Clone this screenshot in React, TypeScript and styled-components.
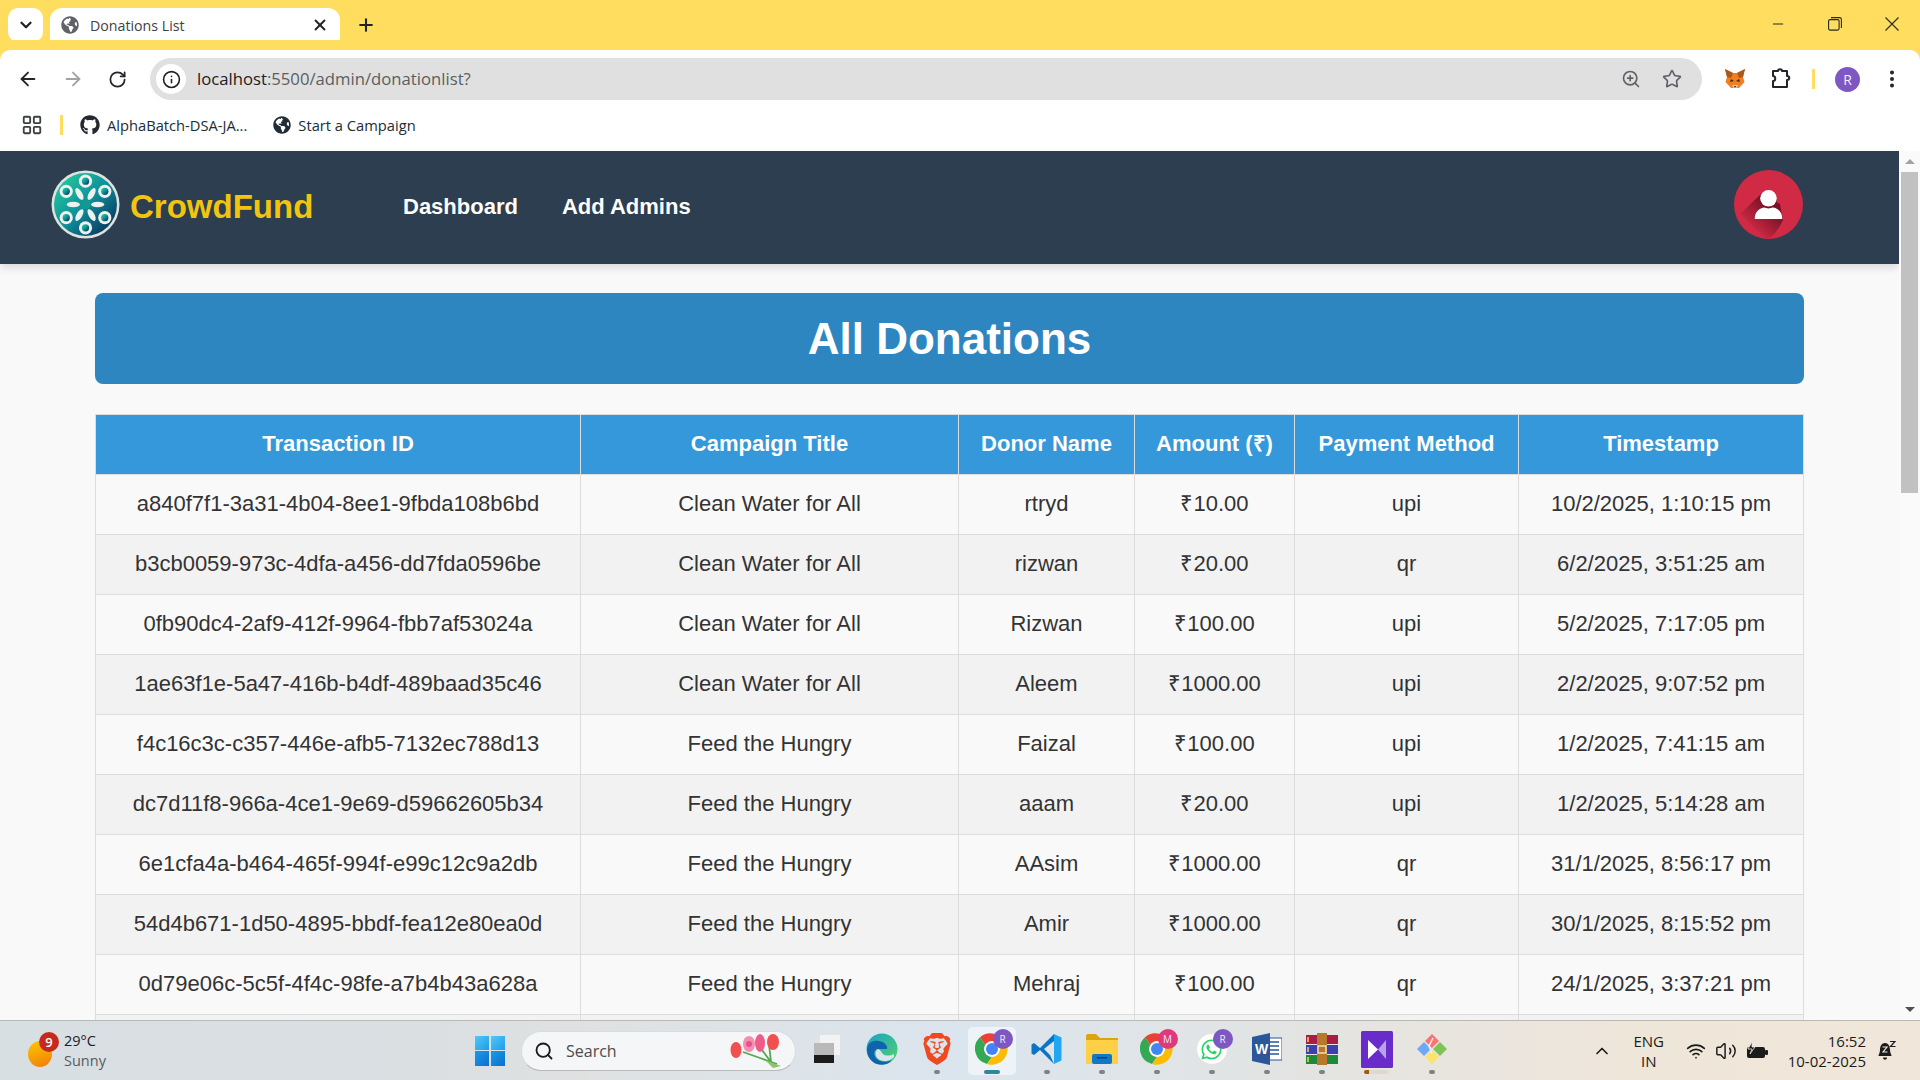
import React from "react";
import styled, { createGlobalStyle } from "styled-components";
import {
    ArrowLeft,
    ArrowRight,
    ChevronDown,
    ChevronUp,
    EllipsisVertical,
    Info,
    LayoutGrid,
    Minus,
    Plus,
    RotateCw,
    Search,
    Star,
    Volume2,
    Wifi,
    X,
    ZoomIn,
} from "lucide-react";
import { FaGithub, FaGlobeAmericas, FaWhatsapp } from "react-icons/fa";
import { SiBrave } from "react-icons/si";

const UI_FONT = `"Open Sans", "Noto Sans", sans-serif`;

const GlobalStyle = createGlobalStyle`
    html, body {
        margin: 0;
        height: 100%;
        overflow: hidden;
    }
    * {
        box-sizing: border-box;
    }
`;

const Screen = styled.div`
    width: 1920px;
    height: 1080px;
    display: flex;
    flex-direction: column;
    overflow: hidden;
    font-family: "Liberation Sans", Arial, sans-serif;
    background: #fff;
`;

/* ---- browser chrome ---- */

const TabStrip = styled.div`
    height: 50px;
    flex: none;
    background: #ffdd5f;
    display: flex;
    align-items: flex-end;
    padding-left: 8px;
`;

const TabSearchButton = styled.div`
    width: 35px;
    height: 34px;
    margin-bottom: 8px;
    margin-right: 7px;
    border-radius: 10px;
    background: #fff;
    color: #1f2328;
    display: flex;
    align-items: center;
    justify-content: center;
`;

const Tab = styled.div`
    position: relative;
    width: 290px;
    height: 42px;
    background: #fff;
    border-radius: 12px 12px 0 0;
    display: flex;
    align-items: center;
    padding: 0 11px 8px 11px;
    color: #5f6368;

    &::after {
        content: "";
        position: absolute;
        right: -12px;
        bottom: 0;
        width: 12px;
        height: 12px;
        background: radial-gradient(circle at 100% 0, transparent 12px, #fff 12.5px);
    }
`;

const TabTitle = styled.span`
    font: 14.2px ${UI_FONT};
    color: #3f4245;
    margin-left: 11px;
    flex: 1;
    white-space: nowrap;
`;

const TabClose = styled.span`
    color: #1f2328;
    display: flex;
`;

const NewTab = styled.div`
    width: 32px;
    height: 32px;
    margin: 0 0 9px 10px;
    color: #1f2328;
    display: flex;
    align-items: center;
    justify-content: center;
`;

const WindowControls = styled.div`
    margin-left: auto;
    height: 50px;
    display: flex;
    align-items: center;
    color: #2a2a20;
`;

const WindowControl = styled.div`
    width: 57px;
    display: flex;
    justify-content: center;
    margin-bottom: 2px;
`;

const Toolbar = styled.div`
    height: 50px;
    flex: none;
    background: #fff;
    display: flex;
    align-items: center;
    padding: 8px 0 0 5px;
    border-radius: 10px 10px 0 0;
    position: relative;
    box-shadow: 0 -10px 0 0 #ffdd5f;
`;

const NavButton = styled.div<{ $muted?: boolean }>`
    width: 45px;
    display: flex;
    justify-content: center;
    color: ${p => (p.$muted ? "#a0a2a5" : "#22262a")};
`;

const AddressBar = styled.div`
    width: 1552px;
    height: 42px;
    margin-left: 10px;
    border-radius: 21px;
    background: #e0e0e0;
    display: flex;
    align-items: center;
    padding: 0 20px 0 6px;
`;

const SiteInfo = styled.div`
    width: 30px;
    height: 30px;
    border-radius: 50%;
    background: #fff;
    color: #202124;
    display: flex;
    align-items: center;
    justify-content: center;
    margin-right: 11px;
`;

const UrlHost = styled.span`
    font: 16.7px ${UI_FONT};
    color: #202124;
    margin-bottom: 1px;
`;

const UrlPath = styled.span`
    font: 16.7px ${UI_FONT};
    color: #5b5e60;
    margin-bottom: 1px;
`;

const BarActions = styled.div`
    margin-left: auto;
    display: flex;
    align-items: center;
    gap: 21px;
    color: #5f6368;
`;

const Extensions = styled.div`
    display: flex;
    align-items: center;
    margin-left: 10px;
`;

const ExtensionSlot = styled.div`
    width: 46px;
    display: flex;
    justify-content: center;
    color: #22262a;
`;

const ToolbarDivider = styled.div`
    width: 3px;
    height: 20px;
    margin: 0 20px 0 8px;
    background: #ffdd5f;
`;

const ProfileBadge = styled.div`
    width: 25px;
    height: 25px;
    border-radius: 50%;
    background: #7e57c2;
    color: #f5eefc;
    font: 14px ${UI_FONT};
    display: flex;
    align-items: center;
    justify-content: center;
    margin-right: 21px;
`;

const BookmarksBar = styled.div`
    height: 51px;
    flex: none;
    background: #fff;
    display: flex;
    align-items: center;
    padding: 0 0 1px 21px;
    color: #202d36;
`;

const BookmarkDivider = styled.div`
    width: 3px;
    height: 20px;
    margin: 0 17px 0 17px;
    background: #ffdd5f;
`;

const Bookmark = styled.div`
    display: flex;
    align-items: center;
    gap: 7px;
    margin-right: 26px;
    font: 14.7px ${UI_FONT};
    color: #202d36;
    white-space: nowrap;
`;

/* ---- page ---- */

const Viewport = styled.div`
    flex: 1;
    min-height: 0;
    display: flex;
    overflow: hidden;
`;

const Page = styled.div`
    width: 1899px;
    flex: none;
    background: #f9f9f9;
`;

const SiteNav = styled.nav`
    height: 113px;
    background: #2c3e50;
    box-shadow: 0 4px 8px rgba(0, 0, 0, 0.12);
    display: flex;
    align-items: center;
    padding: 0 60px 6px 51px;
`;

const Brand = styled.div`
    display: flex;
    align-items: center;
    gap: 10px;
    width: 352px;
`;

const BrandName = styled.span`
    font-size: 33px;
    font-weight: 700;
    color: #f1c40f;
    margin-top: 4px;
`;

const NavLink = styled.a`
    font-size: 22px;
    font-weight: 700;
    color: #fff;
    margin: 4px 44px 0 0;
`;

const UserAvatar = styled.div`
    margin-left: auto;
    margin-right: 36px;
    display: flex;
`;

const Content = styled.main`
    padding: 29px 95px 0 95px;
`;

const Heading = styled.h1`
    margin: 0 0 30px;
    height: 91px;
    border-radius: 8px;
    background: #2e86c1;
    color: #fff;
    font-size: 44px;
    font-weight: 700;
    display: flex;
    align-items: center;
    justify-content: center;
`;

const Table = styled.table`
    width: 100%;
    table-layout: fixed;
    border-collapse: collapse;
    font-size: 22px;
    line-height: 26px;
    color: #333;
`;

const HeadCell = styled.th`
    height: 60px;
    padding: 0 0 2px;
    background: #3498db;
    color: #fff;
    font-size: 22px;
    font-weight: 700;
    text-align: center;
    border: 1px solid #ddd;
`;

const Row = styled.tr`
    background: #f9f9f9;

    &:nth-child(even) {
        background: #f2f2f2;
    }
`;

const Cell = styled.td`
    height: 60px;
    padding: 0 0 1px;
    text-align: center;
    border: 1px solid #ddd;
    white-space: nowrap;
`;

const Scrollbar = styled.div`
    flex: 1;
    display: flex;
    flex-direction: column;
    align-items: center;
    background: #fafafa;
`;

const ScrollArrow = styled.div<{ $down?: boolean }>`
    height: 21px;
    width: 100%;
    flex: none;
    display: flex;
    align-items: center;
    justify-content: center;

    &::before {
        content: "";
        border-left: 5px solid transparent;
        border-right: 5px solid transparent;
        ${p => (p.$down ? "border-top: 5px solid #505050;" : "border-bottom: 5px solid #a3a3a3;")}
    }
`;

const ScrollTrack = styled.div`
    flex: 1;
    width: 100%;
    padding: 0 2px 0 2px;
`;

const ScrollThumb = styled.div`
    height: 321px;
    background: #c1c1c1;
`;

/* ---- taskbar ---- */

const Taskbar = styled.footer`
    height: 60px;
    flex: none;
    display: flex;
    align-items: center;
    border-top: 1px solid #b9b9b7;
    background: linear-gradient(90deg, #d8dfe3 0%, #dadfe2 22%, #dfe1e1 30%, #dbe5ee 50%, #e3e4e2 68%, #efe6da 85%, #f0e6d9 100%);
    color: #1c1c1c;
    font-family: ${UI_FONT};
`;

const Weather = styled.div`
    width: 470px;
    flex: none;
    display: flex;
    align-items: center;
    padding-left: 28px;
    gap: 12px;
`;

const WeatherIcon = styled.div`
    position: relative;
    width: 24px;
    height: 26px;
    margin-top: 6px;
    border-radius: 50%;
    background: linear-gradient(160deg, #ffc800, #f07a0a);
`;

const WeatherBadge = styled.span`
    position: absolute;
    left: 11px;
    top: -9px;
    width: 20px;
    height: 20px;
    border-radius: 50%;
    background: #c42b1c;
    color: #fff;
    font: 600 13px ${UI_FONT};
    display: flex;
    align-items: center;
    justify-content: center;
`;

const WeatherText = styled.div`
    display: flex;
    flex-direction: column;
    font-size: 14.5px;
    line-height: 20px;
`;

const WeatherSub = styled.span`
    color: #565b5e;
`;

const StartButton = styled.div`
    width: 30px;
    height: 30px;
    flex: none;
    margin-right: 16px;
    margin-left: 5px;
    display: grid;
    grid-template-columns: 1fr 1fr;
    gap: 1.5px;
`;

const StartPane = styled.span<{ $deep?: boolean }>`
    background: ${p => (p.$deep ? "linear-gradient(135deg, #1a9be8, #0a6fd0)" : "linear-gradient(135deg, #52c7f9, #1c9de8)")};
`;

const SearchBox = styled.div`
    width: 275px;
    height: 40px;
    flex: none;
    border-radius: 20px;
    background: #f4f6f8;
    border: 1px solid #d9dbdd;
    border-bottom-color: #b8babc;
    display: flex;
    align-items: center;
    padding: 0 10px 0 12px;
    gap: 12px;
    color: #1b1b1b;
    margin-right: 3px;
`;

const SearchLabel = styled.span`
    font-size: 16px;
    color: #4c4c4c;
    flex: 1;
`;

const Apps = styled.div`
    display: flex;
    align-items: center;
`;

const AppSlot = styled.div<{ $active?: boolean }>`
    position: relative;
    width: ${p => (p.$active ? "48px" : "55px")};
    height: 48px;
    margin: ${p => (p.$active ? "0 3.5px" : "0")};
    display: flex;
    align-items: center;
    justify-content: center;
    padding-bottom: 3px;
    border-radius: 5px;
    background: ${p => (p.$active ? "#eef3f8" : "transparent")};
`;

const RunDot = styled.span<{ $active?: boolean }>`
    position: absolute;
    bottom: 1px;
    left: 50%;
    transform: translateX(-50%);
    height: 4px;
    border-radius: 2px;
    width: ${p => (p.$active ? "16px" : "6px")};
    background: ${p => (p.$active ? "#2a8a9c" : "#7f8183")};
`;

const ProgressDot = styled.span`
    position: absolute;
    bottom: 1px;
    left: 15px;
    width: 25px;
    height: 4px;
    border-radius: 2px;
    background: linear-gradient(90deg, #a55a00 0 20%, #ddd8d0 20%);
`;

const AppBadge = styled.span<{ $tone: string; $inset?: boolean }>`
    position: absolute;
    top: 2px;
    right: ${p => (p.$inset ? "3px" : "6.5px")};
    width: 20px;
    height: 20px;
    border-radius: 50%;
    background: ${p => p.$tone};
    color: #f3e9fa;
    font-size: 10px;
    display: flex;
    align-items: center;
    justify-content: center;
`;

const WhatsappDisc = styled.span`
    width: 30px;
    height: 30px;
    border-radius: 50%;
    background: #fff;
    color: #25d366;
    display: flex;
    align-items: center;
    justify-content: center;
`;

const Tray = styled.div`
    margin-left: auto;
    display: flex;
    align-items: center;
    color: #1b1b1b;
`;

const TrayChevron = styled.div`
    display: flex;
    margin-right: 12px;
`;

const Lang = styled.div`
    width: 50px;
    margin-right: 12px;
    text-align: center;
    font-size: 15px;
    line-height: 20px;
`;

const TrayIcons = styled.div`
    display: flex;
    align-items: center;
    gap: 9px;
    margin-right: 20px;
`;

const Clock = styled.div`
    text-align: right;
    font-size: 15px;
    line-height: 20px;
    margin-right: 12px;
`;

const BellSlot = styled.div`
    display: flex;
    margin-right: 24px;
`;

/* ---- drawn icons ---- */

const LOGO_DOTS = [
    [34, 11],
    [53, 21],
    [53, 47],
    [34, 57],
    [15, 47],
    [15, 21],
];

const LOGO_PETALS = [0, 60, 120, 180, 240, 300];

function CrowdFundLogo() {
    return (
        <svg width="69" height="69" viewBox="0 0 68 68">
            <defs>
                <linearGradient id="logoRing" x1="0.1" y1="0.1" x2="0.9" y2="0.9">
                    <stop offset="0" stopColor="#22c79c" />
                    <stop offset="0.5" stopColor="#0f8f9a" />
                    <stop offset="1" stopColor="#0a3560" />
                </linearGradient>
            </defs>
            <circle cx="34" cy="34" r="33.5" fill="#dfe3df" />
            <circle cx="34" cy="34" r="31" fill="url(#logoRing)" />
            {LOGO_DOTS.map(([x, y]) => (
                <React.Fragment key={`${x}-${y}`}>
                    <circle cx={x} cy={y} r="6.5" fill="#eef2ee" />
                    <circle cx={x} cy={y} r="3.6" fill="url(#logoRing)" />
                </React.Fragment>
            ))}
            {LOGO_PETALS.map(a => (
                <ellipse key={a} cx="46" cy="34" rx="6.5" ry="2.8" fill="#eef2ee" transform={`rotate(${a} 34 34)`} />
            ))}
            <circle cx="34" cy="34" r="5" fill="#129a8e" />
        </svg>
    );
}

function UserIcon() {
    return (
        <svg width="69" height="69" viewBox="0 0 69 69">
            <defs>
                <linearGradient id="avatarShade" gradientUnits="userSpaceOnUse" x1="38" y1="38" x2="17" y2="60">
                    <stop offset="0" stopColor="#7a1226" />
                    <stop offset="1" stopColor="#d12a45" />
                </linearGradient>
            </defs>
            <circle cx="34.5" cy="34.5" r="34.5" fill="#d12a45" />
            <path d="M27 24 L6 44 L31 69 Q40 69 49 50 L46 34 Z" fill="url(#avatarShade)" />
            <path d="M20.7 49 C20.7 41 26 37 34.5 37 C43 37 48.3 41 48.3 49 Z" fill="#fff" />
            <circle cx="34.5" cy="30" r="8.5" fill="#7a1226" />
            <circle cx="34.5" cy="28.3" r="8.3" fill="#fff" />
        </svg>
    );
}

function FoxIcon() {
    return (
        <svg width="22" height="22" viewBox="0 0 22 22">
            <path d="M1 1 L9 5 H13 L21 1 L19 9 L20.5 14 L15 20 H7 L1.5 14 L3 9 Z" fill="#f0801f" />
            <path d="M1 1 L9 5 L7 10 L3 9 Z M21 1 L13 5 L15 10 L19 9 Z" fill="#a9591c" />
            <path d="M7 11 L10 13 L6 14 Z M15 11 L12 13 L16 14 Z" fill="#3a2a20" />
            <path d="M8 17 H14 L12.5 20 H9.5 Z" fill="#d9c9bc" />
            <path d="M10 18 H12 L11 20 Z" fill="#222" />
        </svg>
    );
}

function PuzzleIcon() {
    return (
        <svg width="22" height="22" viewBox="0 0 22 22" fill="none" stroke="#22262a" strokeWidth="2" strokeLinejoin="round">
            <path d="M3 3 H8 C8 0.5 12 0.5 12 3 H17 V8 C20 8 20 12 17 12 V19 H3 V13 C6 13 6 8 3 8 Z" />
        </svg>
    );
}

function ChromeIcon({ size = 34 }: { size?: number }) {
    return (
        <svg width={size} height={size} viewBox="0 0 48 48">
            <path d="M24 2 A22 22 0 0 1 43 13 L24 13 A11 11 0 0 0 14.5 18.5 L7 7.5 A22 22 0 0 1 24 2 Z" fill="#ea4335" />
            <path d="M7 7.5 L14.5 18.5 A11 11 0 0 0 24 35 L17 45 A22 22 0 0 1 7 7.5 Z" fill="#34a853" />
            <path d="M43 13 A22 22 0 0 1 17 45 L24 35 A11 11 0 0 0 33.5 18.5 L24 13 Z" fill="#fbbc04" />
            <circle cx="24" cy="24" r="11" fill="#fff" />
            <circle cx="24" cy="24" r="8.5" fill="#4285f4" />
        </svg>
    );
}

function EdgeIcon() {
    return (
        <svg width="32" height="32" viewBox="0 0 32 32">
            <defs>
                <linearGradient id="edgeTop" x1="0" y1="0" x2="1" y2="1">
                    <stop offset="0" stopColor="#1ba1c8" />
                    <stop offset="1" stopColor="#52d36b" />
                </linearGradient>
            </defs>
            <circle cx="16" cy="16" r="15.5" fill="url(#edgeTop)" />
            <path d="M1 17 C1 9 8 7 13 8 C19 9 22 13 21 16 H12 C8 16 7 21 10 25 C13 29 20 30 26 27 C21 33 12 33 7 29 C3 26 1 22 1 17 Z" fill="#0f63ad" />
            <path d="M12 16 C8 18 9 25 14 27 C19 29 24 28 28 24 L28 21 C24 23 19 23 17 21 C15 19 15 17 12 16 Z" fill="#dbe5ee" />
        </svg>
    );
}

function VsCodeIcon() {
    return (
        <svg width="31" height="32" viewBox="0 0 31 32">
            <path d="M23 1 L9 15 L3 10 L0.5 11.5 V20.5 L3 22 L9 17 L23 31 L19 22 L13 16 L23 8 Z" fill="#0b74c4" />
            <path d="M23 1 L30.5 4.5 V27.5 L23 31 Z" fill="#22a7f2" />
        </svg>
    );
}

function TaskViewIcon() {
    return (
        <svg width="26" height="28" viewBox="0 0 26 28">
            <rect x="6" y="0" width="20" height="20" fill="#f3f3f3" />
            <rect x="0" y="8" width="20" height="12" fill="#b9b9b9" />
            <rect x="0" y="20" width="20" height="8" fill="#1c1c1c" />
        </svg>
    );
}

function FolderIcon() {
    return (
        <svg width="32" height="30" viewBox="0 0 32 30">
            <path d="M0 2 Q0 0 2 0 H10 L14 4 H32 V8 H0 Z" fill="#dba50f" />
            <rect x="0" y="6" width="32" height="24" fill="#ffcf48" />
            <rect x="6" y="20" width="20" height="10" rx="2" fill="#0f78c8" />
            <rect x="11" y="23" width="10" height="1.5" fill="#063f70" />
        </svg>
    );
}

function WordIcon() {
    return (
        <svg width="30" height="32" viewBox="0 0 30 32">
            <rect x="10" y="5" width="20" height="22" fill="#fff" stroke="#2b579a" />
            <g stroke="#2b579a" strokeWidth="1.6">
                <path d="M18 9 H27 M18 13 H27 M18 17 H27 M18 21 H27" />
            </g>
            <path d="M0 4 L18 0 V32 L0 28 Z" fill="#2b579a" />
            <text x="3" y="21" fontSize="14" fontWeight="700" fill="#fff" fontFamily="Liberation Sans">W</text>
        </svg>
    );
}

function WinrarIcon() {
    return (
        <svg width="32" height="32" viewBox="0 0 32 32">
            <rect x="0" y="2" width="32" height="9" fill="#a81d46" />
            <rect x="0" y="12" width="32" height="9" fill="#3b3fb0" />
            <rect x="0" y="22" width="32" height="9" fill="#1d8a3a" />
            <rect x="11" y="0" width="10" height="32" fill="#b8772a" />
            <rect x="12" y="13" width="8" height="7" fill="none" stroke="#f0e0b0" strokeWidth="1.5" />
            <path d="M2 4 V9 M2 14 V19 M2 24 V29" stroke="#f2cf5a" strokeWidth="1.5" />
        </svg>
    );
}

function StudioIcon() {
    return (
        <svg width="32" height="37" viewBox="0 0 32 37">
            <rect width="32" height="37" rx="1.5" fill="#6a2bcb" />
            <path d="M7 9 L17 18.5 L7 28 Z" fill="#fff" />
            <path d="M25 9 L17 18.5 L25 28 Z" fill="#b9a2e6" />
        </svg>
    );
}

function DiamondsIcon() {
    return (
        <svg width="32" height="32" viewBox="0 0 32 32">
            <path d="M16 1 L23 8 L16 15 L9 8 Z" fill="#f87573" />
            <path d="M24 9 L31 16 L24 23 L17 16 Z" fill="#7cc455" />
            <path d="M8 9 L15 16 L8 23 L1 16 Z" fill="#6fa8f5" />
            <path d="M16 17 L23 24 L16 31 L9 24 Z" fill="#fbe36d" />
            <path d="M17 5 L13 13 L16 21" stroke="#f1f1f1" strokeWidth="1.5" fill="none" />
        </svg>
    );
}

function FlowersIcon() {
    return (
        <svg width="56" height="34" viewBox="0 0 56 34">
            <path d="M14 18 L48 30 M30 12 L42 28 M40 10 L42 28" stroke="#53a84e" strokeWidth="1.8" fill="none" />
            <path d="M36 26 L52 32 L44 34 Z" fill="#8dc46a" />
            <ellipse cx="7" cy="16" rx="5.5" ry="8" fill="#f0504f" />
            <ellipse cx="20" cy="10" rx="6" ry="8" fill="#f48fb1" />
            <ellipse cx="31" cy="9" rx="5" ry="9" fill="#ee5c8a" />
            <ellipse cx="44" cy="8" rx="6" ry="8" fill="#f0504f" />
            <circle cx="20" cy="10" r="3" fill="#e5528a" />
        </svg>
    );
}

function BatteryIcon() {
    return (
        <svg width="22" height="18" viewBox="0 0 22 18">
            <rect x="1" y="5" width="18" height="11" rx="2" fill="#1b1b1b" />
            <rect x="19" y="8" width="3" height="5" rx="1" fill="#1b1b1b" />
            <path d="M6 0 L2 7 H6 L4 12 L9 5 H6 Z" fill="#1b1b1b" stroke="#efe6da" strokeWidth="0.8" />
        </svg>
    );
}

function BellSnoozeIcon() {
    return (
        <svg width="18" height="20" viewBox="0 0 18 20" fill="#1b1b1b">
            <path d="M7 2 C3 2 2 6 2 9 C2 12 0.5 13 0.5 15 H13.5 C13.5 13 12 12 12 9 C12 6 11 2 7 2 Z" />
            <path d="M5 16.5 H9 C9 19.5 5 19.5 5 16.5 Z" />
            <path d="M4.5 6 H9 L5 11 H9.5" stroke="#efe6da" strokeWidth="1.2" fill="none" />
            <path d="M12 0.5 H17 L12.5 5.5 H17.5" stroke="#1b1b1b" strokeWidth="1.2" fill="none" />
        </svg>
    );
}

/* ---- data ---- */

interface Donation {
    id: string;
    campaign: string;
    donor: string;
    amount: string;
    method: string;
    time: string;
}

const DONATIONS: Donation[] = [
    { id: "a840f7f1-3a31-4b04-8ee1-9fbda108b6bd", campaign: "Clean Water for All", donor: "rtryd", amount: "₹10.00", method: "upi", time: "10/2/2025, 1:10:15 pm" },
    { id: "b3cb0059-973c-4dfa-a456-dd7fda0596be", campaign: "Clean Water for All", donor: "rizwan", amount: "₹20.00", method: "qr", time: "6/2/2025, 3:51:25 am" },
    { id: "0fb90dc4-2af9-412f-9964-fbb7af53024a", campaign: "Clean Water for All", donor: "Rizwan", amount: "₹100.00", method: "upi", time: "5/2/2025, 7:17:05 pm" },
    { id: "1ae63f1e-5a47-416b-b4df-489baad35c46", campaign: "Clean Water for All", donor: "Aleem", amount: "₹1000.00", method: "upi", time: "2/2/2025, 9:07:52 pm" },
    { id: "f4c16c3c-c357-446e-afb5-7132ec788d13", campaign: "Feed the Hungry", donor: "Faizal", amount: "₹100.00", method: "upi", time: "1/2/2025, 7:41:15 am" },
    { id: "dc7d11f8-966a-4ce1-9e69-d59662605b34", campaign: "Feed the Hungry", donor: "aaam", amount: "₹20.00", method: "upi", time: "1/2/2025, 5:14:28 am" },
    { id: "6e1cfa4a-b464-465f-994f-e99c12c9a2db", campaign: "Feed the Hungry", donor: "AAsim", amount: "₹1000.00", method: "qr", time: "31/1/2025, 8:56:17 pm" },
    { id: "54d4b671-1d50-4895-bbdf-fea12e80ea0d", campaign: "Feed the Hungry", donor: "Amir", amount: "₹1000.00", method: "qr", time: "30/1/2025, 8:15:52 pm" },
    { id: "0d79e06c-5c5f-4f4c-98fe-a7b4b43a628a", campaign: "Feed the Hungry", donor: "Mehraj", amount: "₹100.00", method: "qr", time: "24/1/2025, 3:37:21 pm" },
    { id: "", campaign: "", donor: "", amount: "", method: "", time: "" },
];

const COLUMNS = [
    { title: "Transaction ID", width: 485 },
    { title: "Campaign Title", width: 378 },
    { title: "Donor Name", width: 176 },
    { title: "Amount (₹)", width: 160 },
    { title: "Payment Method", width: 224 },
    { title: "Timestamp", width: 285 },
];

export default function App() {
    return (
        <Screen>
            <GlobalStyle />
            <TabStrip>
                <TabSearchButton>
                    <ChevronDown size={18} strokeWidth={3} />
                </TabSearchButton>
                <Tab>
                    <FaGlobeAmericas size={18} color="#5f6368" />
                    <TabTitle>Donations List</TabTitle>
                    <TabClose>
                        <X size={18} strokeWidth={2.5} />
                    </TabClose>
                </Tab>
                <NewTab>
                    <Plus size={20} strokeWidth={2.5} />
                </NewTab>
                <WindowControls>
                    <WindowControl><Minus size={16} strokeWidth={1.6} /></WindowControl>
                    <WindowControl>
                        <svg width="14" height="14" viewBox="0 0 14 14" fill="none" stroke="currentColor" strokeWidth="1.1">
                            <rect x="0.6" y="2.6" width="10.5" height="10.5" rx="1.5" />
                            <path d="M3 0.6 H11.5 Q13.4 0.6 13.4 2.5 V11" />
                        </svg>
                    </WindowControl>
                    <WindowControl>
                        <svg width="14" height="14" viewBox="0 0 14 14" stroke="currentColor" strokeWidth="1.1">
                            <path d="M0.5 0.5 L13.5 13.5 M13.5 0.5 L0.5 13.5" />
                        </svg>
                    </WindowControl>
                </WindowControls>
            </TabStrip>

            <Toolbar>
                <NavButton><ArrowLeft size={22} strokeWidth={2} /></NavButton>
                <NavButton $muted><ArrowRight size={22} strokeWidth={2} /></NavButton>
                <NavButton><RotateCw size={19} strokeWidth={2.2} /></NavButton>
                <AddressBar>
                    <SiteInfo><Info size={19} strokeWidth={2} /></SiteInfo>
                    <UrlHost>localhost</UrlHost>
                    <UrlPath>:5500/admin/donationlist?</UrlPath>
                    <BarActions>
                        <ZoomIn size={20} strokeWidth={2} />
                        <Star size={20} strokeWidth={2} />
                    </BarActions>
                </AddressBar>
                <Extensions>
                    <ExtensionSlot><FoxIcon /></ExtensionSlot>
                    <ExtensionSlot><PuzzleIcon /></ExtensionSlot>
                    <ToolbarDivider />
                    <ProfileBadge>R</ProfileBadge>
                    <EllipsisVertical size={22} strokeWidth={2.4} color="#22262a" />
                </Extensions>
            </Toolbar>

            <BookmarksBar>
                <LayoutGrid size={22} strokeWidth={2} color="#3c4043" />
                <BookmarkDivider />
                <Bookmark><FaGithub size={20} color="#24292f" />AlphaBatch-DSA-JA...</Bookmark>
                <Bookmark><FaGlobeAmericas size={18} color="#202d36" />Start a Campaign</Bookmark>
            </BookmarksBar>

            <Viewport>
                <Page>
                    <SiteNav>
                        <Brand>
                            <CrowdFundLogo />
                            <BrandName>CrowdFund</BrandName>
                        </Brand>
                        <NavLink>Dashboard</NavLink>
                        <NavLink>Add Admins</NavLink>
                        <UserAvatar><UserIcon /></UserAvatar>
                    </SiteNav>
                    <Content>
                        <Heading>All Donations</Heading>
                        <Table>
                            <colgroup>
                                {COLUMNS.map(c => <col key={c.title} width={c.width} />)}
                            </colgroup>
                            <thead>
                                <tr>
                                    {COLUMNS.map(c => <HeadCell key={c.title}>{c.title}</HeadCell>)}
                                </tr>
                            </thead>
                            <tbody>
                                {DONATIONS.map((d, idx) => (
                                    <Row key={idx}>
                                        <Cell>{d.id}</Cell>
                                        <Cell>{d.campaign}</Cell>
                                        <Cell>{d.donor}</Cell>
                                        <Cell>{d.amount}</Cell>
                                        <Cell>{d.method}</Cell>
                                        <Cell>{d.time}</Cell>
                                    </Row>
                                ))}
                            </tbody>
                        </Table>
                    </Content>
                </Page>
                <Scrollbar>
                    <ScrollArrow />
                    <ScrollTrack><ScrollThumb /></ScrollTrack>
                    <ScrollArrow $down />
                </Scrollbar>
            </Viewport>

            <Taskbar>
                <Weather>
                    <WeatherIcon><WeatherBadge>9</WeatherBadge></WeatherIcon>
                    <WeatherText>
                        <span>29°C</span>
                        <WeatherSub>Sunny</WeatherSub>
                    </WeatherText>
                </Weather>
                <StartButton>
                    <StartPane />
                    <StartPane />
                    <StartPane $deep />
                    <StartPane $deep />
                </StartButton>
                <SearchBox>
                    <Search size={20} strokeWidth={2.2} />
                    <SearchLabel>Search</SearchLabel>
                    <FlowersIcon />
                </SearchBox>
                <Apps>
                    <AppSlot><TaskViewIcon /></AppSlot>
                    <AppSlot><EdgeIcon /></AppSlot>
                    <AppSlot><SiBrave size={32} color="#f1491f" /><RunDot /></AppSlot>
                    <AppSlot $active><ChromeIcon /><AppBadge $tone="#7e57c2" $inset>R</AppBadge><RunDot $active /></AppSlot>
                    <AppSlot><VsCodeIcon /><RunDot /></AppSlot>
                    <AppSlot><FolderIcon /><RunDot /></AppSlot>
                    <AppSlot><ChromeIcon /><AppBadge $tone="#e0387a">M</AppBadge><RunDot /></AppSlot>
                    <AppSlot><WhatsappDisc><FaWhatsapp size={23} /></WhatsappDisc><AppBadge $tone="#7e57c2">R</AppBadge><RunDot /></AppSlot>
                    <AppSlot><WordIcon /><RunDot /></AppSlot>
                    <AppSlot><WinrarIcon /><RunDot /></AppSlot>
                    <AppSlot><StudioIcon /><ProgressDot /></AppSlot>
                    <AppSlot><DiamondsIcon /><RunDot /></AppSlot>
                </Apps>
                <Tray>
                    <TrayChevron><ChevronUp size={20} strokeWidth={2} /></TrayChevron>
                    <Lang>ENG<br />IN</Lang>
                    <TrayIcons>
                        <Wifi size={20} strokeWidth={2} />
                        <Volume2 size={22} strokeWidth={1.6} />
                        <BatteryIcon />
                    </TrayIcons>
                    <Clock>16:52<br />10-02-2025</Clock>
                    <BellSlot><BellSnoozeIcon /></BellSlot>
                </Tray>
            </Taskbar>
        </Screen>
    );
}
